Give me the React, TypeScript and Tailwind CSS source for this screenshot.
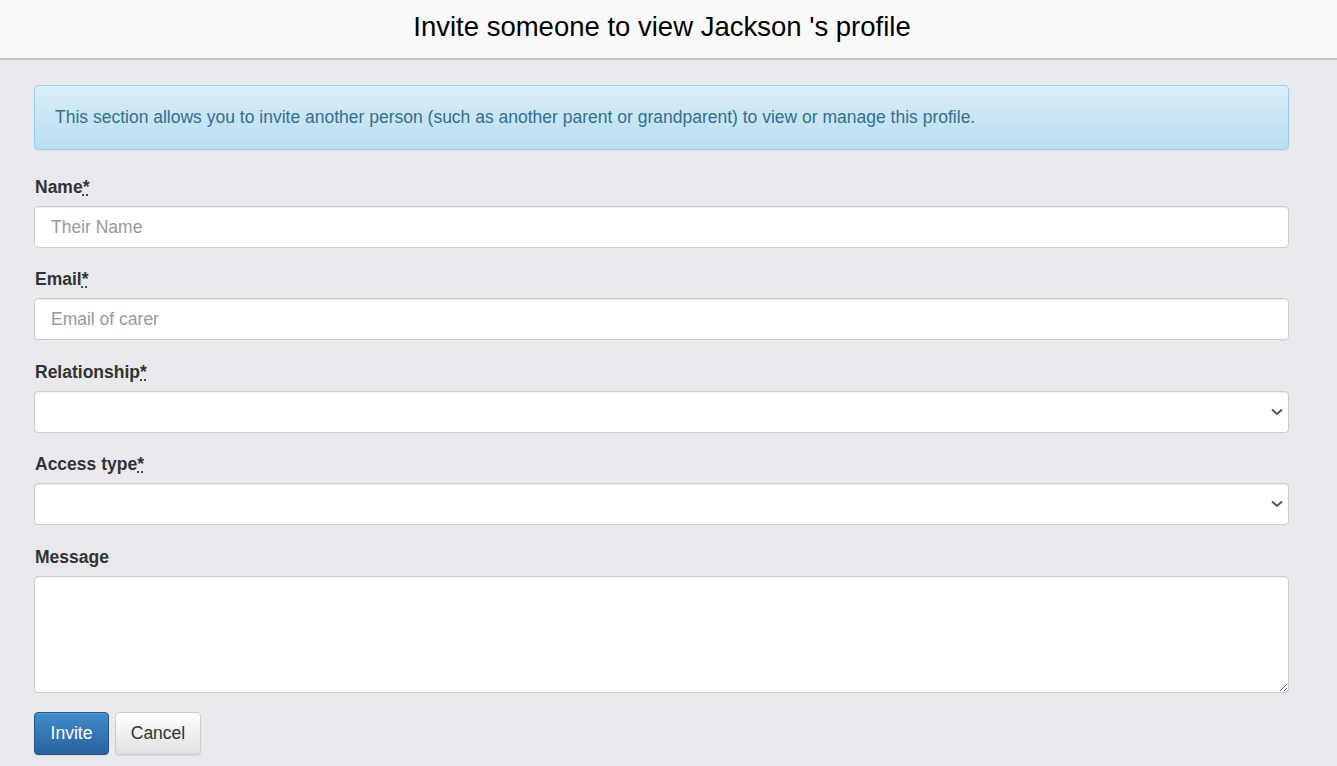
import React from "react";

const Req = () => (
  <abbr title="required" className="no-underline" style={{ textDecoration: "underline dotted", textUnderlineOffset: "2px" }}>
    *
  </abbr>
);

const Chevron = () => (
  <svg className="pointer-events-none absolute right-[6px] top-1/2 -translate-y-1/2" width="12" height="7" viewBox="0 0 12 7" fill="none">
    <path d="M1 1 L6 5.5 L11 1" stroke="#555" strokeWidth="2" />
  </svg>
);

export default function App() {
  const font = { fontFamily: '"Liberation Sans", Arial, Helvetica, sans-serif' };
  const inputCls =
    "block w-full h-[42px] rounded-[4px] border border-[#ccc] bg-white px-[16px] text-[17.5px] text-[#555] placeholder:text-[#999] shadow-[inset_0_1px_1px_rgba(0,0,0,0.075)] outline-none";
  const labelCls = "block text-[17.5px] leading-[22px] font-bold text-[#333] mb-[8px] pl-[1px]";
  return (
    <div className="min-h-[766px] bg-[#e8e9ec]" style={font}>
      <header className="h-[60px] bg-[#f9f9f9] border-b-2 border-[#c4c4c4] flex items-center justify-center pr-[13px]">
        <h1 className="text-[27.5px] leading-none text-black font-normal -mt-[4px]">Invite someone to view Jackson 's profile</h1>
      </header>
      <main className="pl-[34px] pr-[48px] pt-[25px]">
        <div className="h-[65px] rounded-[4px] border border-[#9acfea] bg-gradient-to-b from-[#d9edf7] to-[#b9def0] px-[20px] flex items-center text-[17.5px] text-[#31708f] shadow-[inset_0_1px_0_rgba(255,255,255,0.25),0_1px_2px_rgba(0,0,0,0.05)]">
          This section allows you to invite another person (such as another parent or grandparent) to view or manage this profile.
        </div>

        <form className="mt-[26px]" onSubmit={(e) => e.preventDefault()}>
          <div className="mb-[20px]">
            <label className={labelCls}>
              Name<Req />
            </label>
            <input className={inputCls} placeholder="Their Name" />
          </div>
          <div className="mb-[21px]">
            <label className={labelCls}>
              Email<Req />
            </label>
            <input className={inputCls} placeholder="Email of carer" />
          </div>
          <div className="mb-[20px]">
            <label className={labelCls}>
              Relationship<Req />
            </label>
            <div className="relative">
              <select className={inputCls + " appearance-none"} defaultValue="">
                <option value=""></option>
              </select>
              <Chevron />
            </div>
          </div>
          <div className="mb-[21px]">
            <label className={labelCls}>
              Access type<Req />
            </label>
            <div className="relative">
              <select className={inputCls + " appearance-none"} defaultValue="">
                <option value=""></option>
              </select>
              <Chevron />
            </div>
          </div>
          <div className="mb-[19px]">
            <label className={labelCls}>Message</label>
            <textarea className="block w-full h-[117px] rounded-[4px] border border-[#ccc] bg-white px-[16px] py-[10px] text-[17.5px] text-[#555] shadow-[inset_0_1px_1px_rgba(0,0,0,0.075)] outline-none" />
          </div>
          <div className="flex gap-[6px]">
            <button className="h-[43px] w-[75px] rounded-[4px] border border-[#245580] bg-gradient-to-b from-[#3f8dcb] to-[#2862a0] text-white text-[17.5px] shadow-[inset_0_1px_0_rgba(255,255,255,0.15),0_1px_1px_rgba(0,0,0,0.075)]">
              Invite
            </button>
            <button className="h-[43px] w-[86px] rounded-[4px] border border-[#ccc] bg-gradient-to-b from-white to-[#e0e0e0] text-[#333] text-[17.5px] shadow-[inset_0_1px_0_rgba(255,255,255,0.15),0_1px_1px_rgba(0,0,0,0.075)]">
              Cancel
            </button>
          </div>
        </form>
      </main>
    </div>
  );
}
